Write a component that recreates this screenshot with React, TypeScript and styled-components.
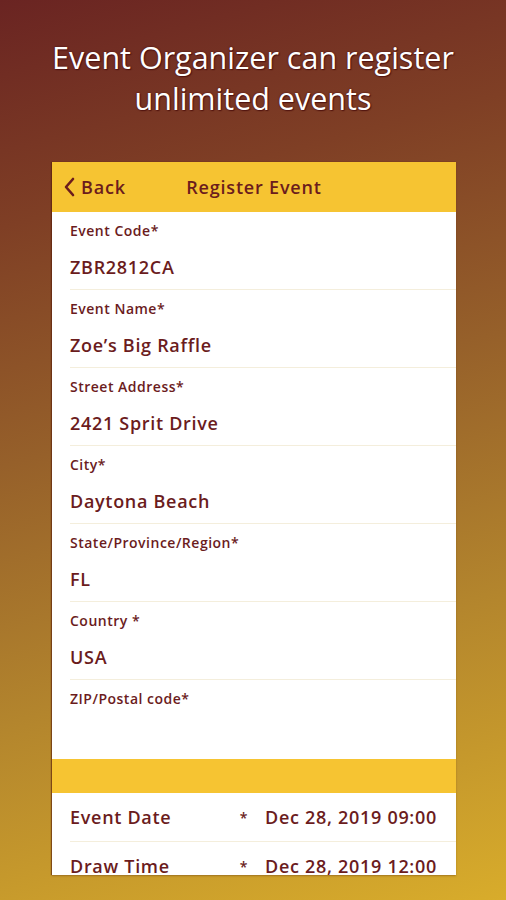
import React from "react";
import styled, { createGlobalStyle } from "styled-components";

const GlobalStyle = createGlobalStyle`
  html, body {
    margin: 0;
    padding: 0;
  }
  body {
    font-family: "Open Sans", Lato, sans-serif;
  }
`;

const ink = "#6b1c1d";

const Page = styled.div`
  width: 506px;
  height: 900px;
  overflow: hidden;
  background: linear-gradient(165deg, #6a2422 0%, #7f3f25 22%, #96602a 45%, #b3852d 70%, #d8ac2b 100%);
  display: flex;
  flex-direction: column;
  align-items: flex-start;
`;

const Headline = styled.h1`
  width: 100%;
  margin: 0;
  padding-top: 37px;
  height: 162px;
  flex-shrink: 0;
  box-sizing: border-box;
  text-align: center;
  font-family: "Open Sans", sans-serif;
  font-weight: 400;
  font-size: 30.5px;
  line-height: 41px;
  color: #fff;
  text-shadow: 0 0 2px rgba(70, 10, 10, 0.9), 1px 1px 1px rgba(70, 10, 10, 0.7);
`;

const Card = styled.div`
  margin-left: 52px;
  width: 404px;
  height: 713px;
  flex-shrink: 0;
  overflow: hidden;
  background: #fff;
  box-shadow: -1px 0 1px rgba(90, 30, 10, 0.6), 0 1px 2px rgba(90, 50, 10, 0.3);
  display: flex;
  flex-direction: column;
`;

const TopBar = styled.div`
  height: 50px;
  flex-shrink: 0;
  background: #f6c432;
  display: flex;
  align-items: center;
  position: relative;
  color: ${ink};
  font-family: "Open Sans", sans-serif;
  font-weight: 600;
  font-size: 18px;
  letter-spacing: 0.8px;
`;

const BackButton = styled.div`
  display: flex;
  align-items: center;
  gap: 6px;
  padding-left: 11px;
  z-index: 1;
`;

const BarTitle = styled.div`
  position: absolute;
  left: 0;
  right: 0;
  text-align: center;
`;

const Field = styled.div<{ $tall?: boolean }>`
  height: ${(p) => (p.$tall ? 79 : 78)}px;
  flex-shrink: 0;
  box-sizing: border-box;
  margin-left: 18px;
  padding-top: 11px;
  border-bottom: ${(p) => (p.$tall ? "none" : "1px solid #f4eedc")};
  display: flex;
  flex-direction: column;
  gap: 17px;
`;

const Label = styled.div`
  font-family: "Open Sans", sans-serif;
  font-weight: 600;
  font-size: 14px;
  line-height: 16px;
  letter-spacing: 0.5px;
  color: ${ink};
`;

const Value = styled.div`
  font-family: "Open Sans", sans-serif;
  font-weight: 600;
  font-size: 18px;
  line-height: 22px;
  letter-spacing: 0.7px;
  color: ${ink};
`;

const Divider = styled.div`
  height: 34px;
  flex-shrink: 0;
  background: #f6c432;
`;

const DateRow = styled.div`
  height: 49px;
  flex-shrink: 0;
  box-sizing: border-box;
  margin-left: 18px;
  padding-right: 19px;
  border-bottom: 1px solid #f4eedc;
  display: flex;
  align-items: center;
  font-family: "Open Sans", sans-serif;
  font-weight: 600;
  font-size: 18px;
  letter-spacing: 0.7px;
  color: ${ink};
`;

const DateLabel = styled.span`
  flex: 1;
`;

const Star = styled.span`
  font-size: 14px;
  margin-right: 17px;
  align-self: flex-start;
  margin-top: 15px;
`;

const fields = [
  { label: "Event Code*", value: "ZBR2812CA" },
  { label: "Event Name*", value: "Zoe’s Big Raffle" },
  { label: "Street Address*", value: "2421 Sprit Drive" },
  { label: "City*", value: "Daytona Beach" },
  { label: "State/Province/Region*", value: "FL" },
  { label: "Country *", value: "USA" },
];

const dates = [
  { label: "Event Date", value: "Dec 28, 2019 09:00" },
  { label: "Draw Time", value: "Dec 28, 2019 12:00" },
];

export default function App() {
  return (
    <Page>
      <GlobalStyle />
      <Headline>
        Event Organizer can register
        <br />
        unlimited events
      </Headline>
      <Card>
        <TopBar>
          <BackButton>
            <svg width="12" height="20" viewBox="0 0 12 20">
              <path d="M10 2 L3 10 L10 18" fill="none" stroke={ink} strokeWidth="2.6" strokeLinecap="round" strokeLinejoin="round" />
            </svg>
            Back
          </BackButton>
          <BarTitle>Register Event</BarTitle>
        </TopBar>
        {fields.map((f) => (
          <Field key={f.label}>
            <Label>{f.label}</Label>
            <Value>{f.value}</Value>
          </Field>
        ))}
        <Field $tall>
          <Label>ZIP/Postal code*</Label>
        </Field>
        <Divider />
        {dates.map((d) => (
          <DateRow key={d.label}>
            <DateLabel>{d.label}</DateLabel>
            <Star>*</Star>
            <span>{d.value}</span>
          </DateRow>
        ))}
      </Card>
    </Page>
  );
}
